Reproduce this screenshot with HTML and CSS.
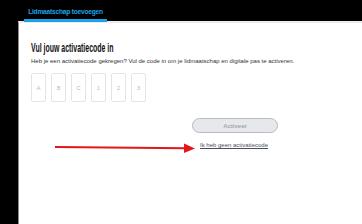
FILE: index.html
```html
<!DOCTYPE html>
<html lang="nl">
<head>
    <meta charset="UTF-8">
    <title>Lidmaatschap toevoegen</title>
    <link rel="stylesheet" href="styles.css">
</head>
<body>

<div class="nav">
    <div class="tab">Lidmaatschap toevoegen</div>
</div>

<div class="panel">
    <h1>Vul jouw activatiecode in</h1>
    <p class="intro">Heb je een activatiecode gekregen? Vul de code in om je lidmaatschap en digitale pas te activeren.</p>

    <div class="codes">
        <div class="code">A</div>
        <div class="code">B</div>
        <div class="code">C</div>
        <div class="code">1</div>
        <div class="code">2</div>
        <div class="code">3</div>
    </div>

    <div class="actions">
        <button class="activate-btn">Activeer</button>
        <a class="no-code" href="#">Ik heb geen activatiecode</a>
    </div>
</div>

<!-- annotation arrow -->
<svg class="arrow" width="362" height="224" viewBox="0 0 362 224">
    <line x1="55" y1="147" x2="186" y2="148.3" stroke="#e3161b" stroke-width="2"/>
    <polygon points="184,143.5 195,148.4 184,153" fill="#e3161b"/>
</svg>

</body>
</html>
```

FILE: styles.css
```css
/* General */
body {
    margin: 0;
    background: #000000;
    font-family: "Liberation Sans", Arial, sans-serif;
    width: 362px;
    height: 224px;
    overflow: hidden;
    position: relative;
}

/* Top navigation */
.nav {
    height: 21px;
    padding-left: 24px;
}

.tab {
    display: inline-block;
    box-sizing: border-box;
    height: 21px;
    width: 83px;
    padding-top: 5px;
    text-align: center;
    white-space: nowrap;
    color: #1aa3e6;
    font-size: 6.6px;
    font-weight: bold;
    letter-spacing: -0.2px;
}

/* White panel */
.panel {
    margin-left: 18px;
    height: 203px;
    background: #ffffff;
    border-left: 1px solid #8a8a8a;
    border-top: 2px solid #ececec;
    box-sizing: border-box;
    padding: 19px 0 0 12px;
    position: relative;
}

.panel::before {
    content: "";
    position: absolute;
    left: 5px;
    top: -4px;
    width: 83px;
    height: 3px;
    background: #1aa3e6;
}

h1 {
    margin: 0;
    font-family: "Liberation Sans", Arial, sans-serif;
    font-size: 12px;
    font-weight: bold;
    color: #111111;
    line-height: 12px;
    white-space: nowrap;
    transform: scaleX(0.58);
    transform-origin: left center;
}

.intro {
    margin: 3px 0 0;
    font-size: 6px;
    color: #333333;
    line-height: 8px;
}

/* Code inputs */
.codes {
    display: flex;
    gap: 5px;
    margin-top: 8px;
}

.code {
    width: 15px;
    height: 29px;
    box-sizing: border-box;
    border: 1px solid #e2e4e8;
    border-radius: 2px;
    display: flex;
    align-items: center;
    justify-content: center;
    font-size: 5.5px;
    color: #b4b7bd;
}

/* Actions */
.actions {
    display: flex;
    flex-direction: column;
    align-items: flex-start;
    margin: 16px 0 0 161px;
}

.activate-btn {
    width: 86px;
    height: 15px;
    border: 1px solid #b8bbc2;
    border-radius: 8px;
    background: #e7e8ec;
    color: #a4a7ae;
    font-family: "Liberation Sans", Arial, sans-serif;
    font-size: 6px;
    font-weight: bold;
    padding: 0;
}

.no-code {
    margin: 9px 0 0 8px;
    font-size: 6px;
    color: #4a4f5c;
    text-decoration: underline;
}

/* Annotation */
.arrow {
    position: absolute;
    left: 0;
    top: 0;
}
```
